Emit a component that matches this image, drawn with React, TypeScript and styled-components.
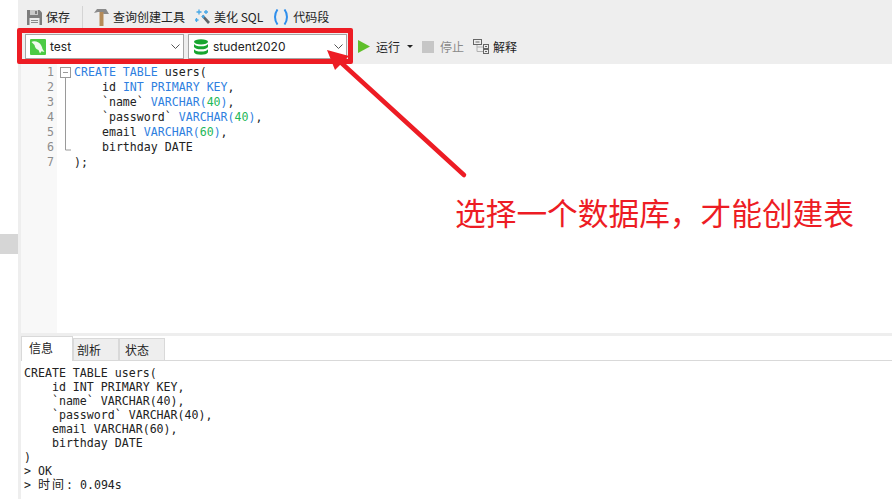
import styled, { createGlobalStyle } from "styled-components";

const editorLines = [1, 2, 3, 4, 5, 6, 7];

const outputLines = [
  "CREATE TABLE users(",
  "    id INT PRIMARY KEY,",
  "    `name` VARCHAR(40),",
  "    `password` VARCHAR(40),",
  "    email VARCHAR(60),",
  "    birthday DATE",
  ")",
  "> OK",
];

const SaveIcon = () => (
  <svg width="15" height="15" viewBox="0 0 15 15">
    <path d="M0 0h12.500L15 2.500V15H0z" fill="#7d7d7d" />
    <rect x="3" y="0" width="8" height="5" fill="#c9c9c9" />
    <rect x="8" y="1" width="2" height="3" fill="#7d7d7d" />
    <rect x="2.500" y="8" width="10" height="7" fill="#ececec" />
    <rect x="4" y="10" width="7" height="1" fill="#8a8a8a" />
    <rect x="4" y="12" width="7" height="1" fill="#8a8a8a" />
  </svg>
);

const HammerIcon = () => (
  <svg width="15" height="18" viewBox="0 0 15 18">
    <path d="M3 1h9l3 5H9.500L8 4H4L0 5z" fill="#8a8a8a" />
    <rect x="5.500" y="4" width="4" height="14" fill="#b58b58" />
  </svg>
);

const WandIcon = () => (
  <svg width="15" height="16" viewBox="0 0 15 16">
    <path d="M6.500 7.500l1.800-1.800 6.700 7.300-2 2z" fill="#5f6468" />
    <path d="M4 .5v5M1.500 3h5M11 1v4M9 3h4M1.500 9v4M0 11h3.500" stroke="#45a7e6" strokeWidth="1.300" />
    <path d="M6.500 7.500l1.800-1.800 1.700 1.900-1.800 1.800z" fill="#45a7e6" />
  </svg>
);

const BracesIcon = () => (
  <svg width="16" height="16" viewBox="0 0 16 16" fill="none" stroke="#2f8fec" strokeWidth="2">
    <path d="M4.500 .5C1.200 5 1.200 11 4.500 15.500" />
    <path d="M11.500 .5C14.800 5 14.800 11 11.500 15.500" />
  </svg>
);

const ConnectionIcon = () => (
  <svg width="16" height="16" viewBox="0 0 16 16">
    <rect width="16" height="16" rx="1" fill="#4ccb45" />
    <path d="M1.500 3C3 1.800 6 2 8.500 3.500 11 5 12 7.500 12.500 10l2 3-3-.8L10 14.500 8.500 11C6 10.500 5 8.500 4.500 6 3.500 5 2.500 4.200 1.500 3z" fill="#f2fbf0" />
  </svg>
);

const DatabaseIcon = () => (
  <svg width="16" height="16" viewBox="0 0 16 16" fill="#17a52f">
    <ellipse cx="8" cy="2.800" rx="7" ry="2.600" />
    <path d="M1 5c1 1.600 3.500 2.300 7 2.300S14 6.600 15 5v3c-1 1.600-3.500 2.300-7 2.300S2 9.600 1 8z" />
    <path d="M1 10.300c1 1.600 3.500 2.300 7 2.300s6-.7 7-2.300v3c-1 1.800-3.500 2.500-7 2.500s-6-.7-7-2.500z" />
  </svg>
);

const ChevronIcon = () => (
  <svg width="9" height="6" viewBox="0 0 9 6" fill="none" stroke="#555" strokeWidth="1">
    <path d="M.5.500L4.500 4.500 8.500.500" />
  </svg>
);

const PlayIcon = () => (
  <svg width="12" height="13" viewBox="0 0 12 13">
    <path d="M0 0l12 6.500L0 13z" fill="#5fbf2a" />
  </svg>
);

const ExplainIcon = () => (
  <svg width="16" height="15" viewBox="0 0 16 15" fill="none">
    <path d="M4 5v7.500h6M4 8h6" stroke="#b0b0b0" />
    <g stroke="#666">
      <rect x="0.500" y="0.500" width="8" height="5" />
      <path d="M2.500 3h4" />
      <rect x="10.500" y="5.500" width="5" height="4" />
      <path d="M12 7.500h2" />
      <rect x="10.500" y="10.500" width="5" height="4" />
      <path d="M12 12.500h2" />
    </g>
  </svg>
);

const FoldMarks = () => (
  <svg width="12" height="90" viewBox="0 0 12 90" fill="none" stroke="#9a9a9a" strokeWidth="1">
    <rect x="0.500" y="0.500" width="10" height="10" />
    <path d="M3 5.500h5M5.500 11v72H11" />
  </svg>
);

export default function App() {
  return (
    <>
      <GlobalStyle />
      <Page>
        <SideStrip>
          <SideMarker />
        </SideStrip>
        <Main>
          <Toolbar>
            <ActionRow>
              <ToolButton>
                <SaveIcon />
                保存
              </ToolButton>
              <Separator />
              <ToolButton>
                <HammerIcon />
                查询创建工具
              </ToolButton>
              <ToolButton>
                <WandIcon />
                美化 SQL
              </ToolButton>
              <ToolButton>
                <BracesIcon />
                代码段
              </ToolButton>
            </ActionRow>
            <SelectRow>
              <SelectBox>
                <ConnectionIcon />
                <SelectLabel>test</SelectLabel>
                <ChevronIcon />
              </SelectBox>
              <SelectBox>
                <DatabaseIcon />
                <SelectLabel>student2020</SelectLabel>
                <ChevronIcon />
              </SelectBox>
              <RunGroup>
                <ToolButton $gap={6}>
                  <PlayIcon />
                  运行
                </ToolButton>
                <Caret />
                <ToolButton $gap={6} $disabled>
                  <StopSquare />
                  停止
                </ToolButton>
                <ToolButton>
                  <ExplainIcon />
                  解释
                </ToolButton>
              </RunGroup>
            </SelectRow>
          </Toolbar>
          <Editor>
            <Gutter>
              {editorLines.map((n) => (
                <LineNumber key={n}>{n}</LineNumber>
              ))}
            </Gutter>
            <FoldColumn>
              <FoldMarks />
            </FoldColumn>
            <Code>
              <div>
                <Kw>CREATE TABLE</Kw> users(
              </div>
              <div>
                {"    "}id <Kw>INT PRIMARY KEY</Kw>,
              </div>
              <div>
                {"    "}`name` <Kw>VARCHAR(</Kw>
                <Num>40</Num>
                <Kw>)</Kw>,
              </div>
              <div>
                {"    "}`password` <Kw>VARCHAR(</Kw>
                <Num>40</Num>
                <Kw>)</Kw>,
              </div>
              <div>
                {"    "}email <Kw>VARCHAR(</Kw>
                <Num>60</Num>
                <Kw>)</Kw>,
              </div>
              <div>{"    "}birthday DATE</div>
              <div>);</div>
            </Code>
          </Editor>
          <Divider />
          <Tabs>
            <Tab $active $pad={7}>
              信息
            </Tab>
            <Tab $pad={3}>剖析</Tab>
            <Tab $pad={5}>状态</Tab>
          </Tabs>
          <Output>
            {outputLines.map((line) => (
              <div key={line}>{line}</div>
            ))}
            <div>
              {"> "}
              <WideCell>时间</WideCell>: 0.094s
            </div>
          </Output>
        </Main>
        <HighlightBox />
        <Arrow width="892" height="499" viewBox="0 0 892 499">
          <path d="M464 175L336 58" stroke="#ed1c24" strokeWidth="4.500" strokeLinecap="round" />
          <path d="M327 50L349 56L335 70z" fill="#ed1c24" />
        </Arrow>
        <Note>选择一个数据库，才能创建表</Note>
      </Page>
    </>
  );
}

const GlobalStyle = createGlobalStyle`
  html, body {
    margin: 0;
    padding: 0;
    background: #fff;
  }
`;

const Page = styled.div`
  position: relative;
  display: flex;
  width: 892px;
  height: 499px;
  overflow: hidden;
  font-family: "Noto Sans CJK SC", "Liberation Sans", sans-serif;
  color: #222;
`;

const SideStrip = styled.div`
  width: 18px;
  flex: none;
  padding-top: 234px;
  box-sizing: border-box;
`;

const SideMarker = styled.div`
  height: 20px;
  background: #d6d6d6;
`;

const Main = styled.div`
  flex: 1;
  min-width: 0;
  display: flex;
  flex-direction: column;
  border-left: 3px solid #eeeeee;
`;

const Toolbar = styled.div`
  height: 64px;
  flex: none;
  background: #eeeeee;
  display: flex;
  flex-direction: column;
`;

const ActionRow = styled.div`
  height: 34px;
  flex: none;
  display: flex;
  align-items: center;
  padding-left: 6px;
  gap: 10px;
`;

const ToolButton = styled.div<{ $disabled?: boolean; $gap?: number }>`
  display: flex;
  align-items: center;
  gap: ${(p) => p.$gap ?? 4}px;
  font-size: 12px;
  line-height: 16px;
  white-space: nowrap;
  color: ${(p) => (p.$disabled ? "#8a8a8a" : "#222")};
`;

const Separator = styled.div`
  width: 1px;
  height: 22px;
  background: #d4d4d4;
  margin: 0 1px 0 2px;
`;

const SelectRow = styled.div`
  height: 25px;
  flex: none;
  display: flex;
  align-items: center;
  padding-left: 4px;
  gap: 4px;
`;

const SelectBox = styled.div`
  width: 159px;
  height: 25px;
  box-sizing: border-box;
  flex: none;
  background: #fff;
  border: 1px solid #a6a6a6;
  display: flex;
  align-items: center;
  gap: 4px;
  padding: 0 3px 0 4px;
`;

const SelectLabel = styled.span`
  flex: 1;
  font-family: "Inter", "Liberation Sans", sans-serif;
  font-size: 12px;
  color: #222;
`;

const RunGroup = styled.div`
  display: flex;
  align-items: center;
  margin-left: 7px;
  gap: 9px;
`;

const Caret = styled.div`
  width: 0;
  height: 0;
  border-left: 3px solid transparent;
  border-right: 3px solid transparent;
  border-top: 3px solid #222;
  margin: 0 0 0 -2px;
`;

const StopSquare = styled.div`
  width: 12px;
  height: 12px;
  background: #c6c6c6;
`;

const Editor = styled.div`
  height: 269px;
  flex: none;
  display: flex;
  background: #fff;
  font-family: "DejaVu Sans Mono", monospace;
  font-size: 11.600px;
  line-height: 15px;
`;

const Gutter = styled.div`
  width: 36px;
  box-sizing: border-box;
  flex: none;
  background: #f8f8f8;
  padding: 1px 3px 0 0;
  text-align: right;
  color: #8c8c8c;
`;

const LineNumber = styled.div`
  height: 15px;
`;

const FoldColumn = styled.div`
  width: 17px;
  box-sizing: border-box;
  flex: none;
  padding: 3px 0 0 3px;
`;

const Code = styled.pre`
  margin: 0;
  padding: 1px 0 0 0;
  font: inherit;
  color: #222;
`;

const Kw = styled.span`
  color: #2f7fe0;
`;

const Num = styled.span`
  color: #1fb85a;
`;

const Divider = styled.div`
  height: 3px;
  flex: none;
  background: #eeeeee;
`;

const Tabs = styled.div`
  height: 25px;
  flex: none;
  box-sizing: border-box;
  display: flex;
  align-items: flex-end;
  border-bottom: 1px solid #d9d9d9;
`;

const Tab = styled.div<{ $active?: boolean; $pad: number }>`
  width: ${(p) => (p.$active ? 52 : 46)}px;
  height: ${(p) => (p.$active ? 25 : 22)}px;
  box-sizing: border-box;
  display: flex;
  align-items: center;
  padding: ${(p) => (p.$active ? "0 0 4px" : "0")} ${(p) => p.$pad}px;
  font-size: 12px;
  color: #222;
  background: ${(p) => (p.$active ? "#fff" : "#eeeeee")};
  border: 1px solid #d9d9d9;
  border-bottom: none;
  margin-bottom: ${(p) => (p.$active ? -1 : 0)}px;
`;

const Output = styled.pre`
  margin: 0;
  padding: 5px 0 0 3px;
  font-family: "DejaVu Sans Mono", "Noto Sans CJK SC", monospace;
  font-size: 11.600px;
  line-height: 14px;
  color: #222;
`;

const WideCell = styled.span`
  font-size: 12px;
  letter-spacing: 2px;
`;

const HighlightBox = styled.div`
  position: absolute;
  left: 17px;
  top: 28px;
  width: 336px;
  height: 36px;
  box-sizing: border-box;
  border: 5px solid #ed1c24;
  border-radius: 2px;
`;

const Arrow = styled.svg`
  position: absolute;
  left: 0;
  top: 0;
  pointer-events: none;
`;

const Note = styled.div`
  position: absolute;
  left: 455px;
  top: 190px;
  font-size: 30.700px;
  line-height: 44px;
  color: #ed1c24;
  white-space: nowrap;
`;
